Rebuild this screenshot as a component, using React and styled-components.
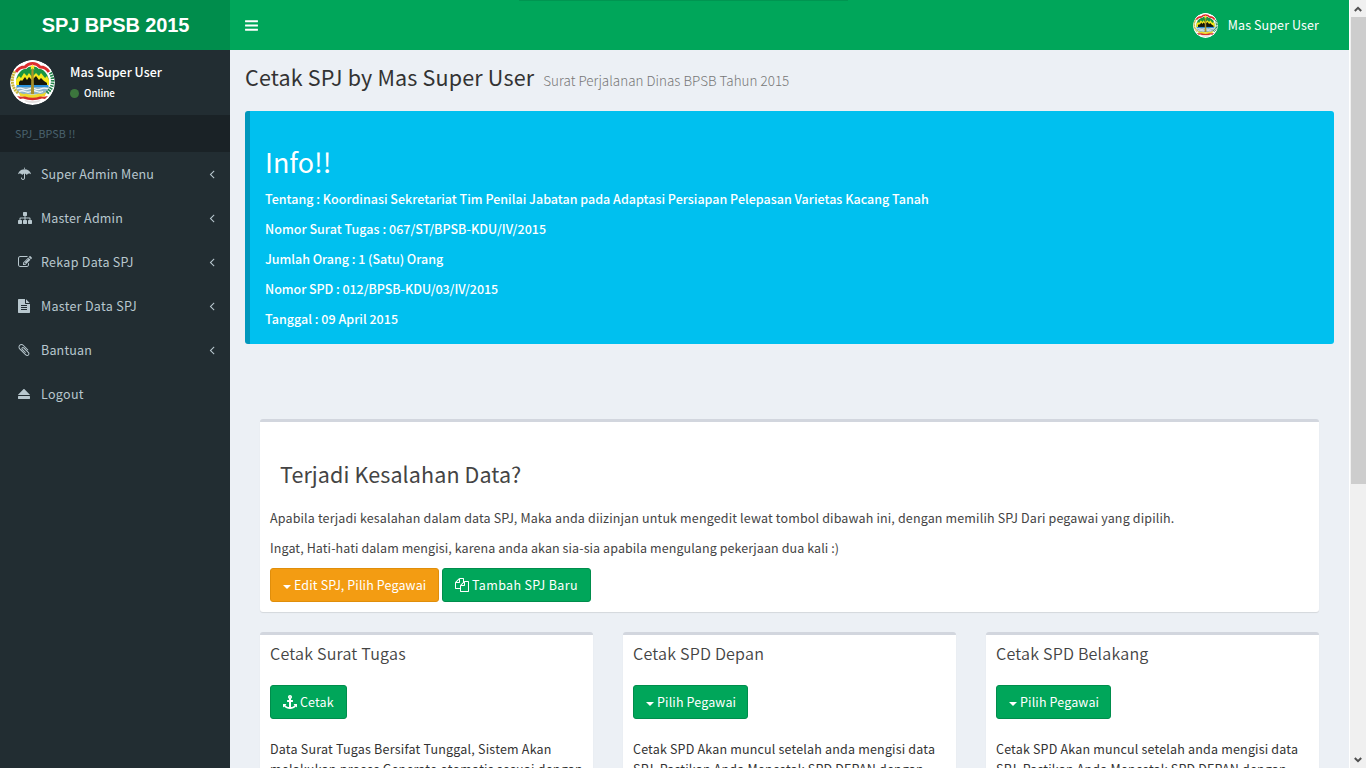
import React from "react";
import styled, { createGlobalStyle } from "styled-components";

const GlobalStyle = createGlobalStyle`
  *, *::before, *::after { box-sizing: border-box; }
  html, body { margin: 0; height: 768px; overflow: hidden; }
  body {
    font-family: "Noto Sans CJK JP", "Noto Sans", sans-serif;
    font-size: 12.5px;
    line-height: 20px;
    color: #333;
    background: #ecf0f5;
  }
  h1, h2, h3, h4, p { margin: 0; font-weight: 400; }
`;

/* ---------- icons: [left edge, width, path] in a 1792-unit-high box ---------- */

const ICONS = {
  bars: [0, 1792, "M1664 1344v128q0 26-19 45t-45 19h-1408q-26 0-45-19t-19-45v-128q0-26 19-45t45-19h1408q26 0 45 19t19 45zm0-512v128q0 26-19 45t-45 19h-1408q-26 0-45-19t-19-45v-128q0-26 19-45t45-19h1408q26 0 45 19t19 45zm0-512v128q0 26-19 45t-45 19h-1408q-26 0-45-19t-19-45v-128q0-26 19-45t45-19h1408q26 0 45 19t19 45z"],
  umbrella: [0, 1664, "M896 708v692q0 104-76 180t-180 76-180-76-76-180q0-26 19-45t45-19 45 19 19 45q0 50 39 89t89 39 89-39 39-89v-692q33-11 74-11t74 11zM1664 889q0 13-9.500 22.500t-22.500 9.500q-11 0-23-10-49-46-93-69t-102-23q-68 0-128 37t-103 97q-7 10-17.500 28t-14.500 24q-11 17-28 17-18 0-29-17-4-6-14.500-24t-17.500-28q-43-60-102.500-97t-127.500-37-127.500 37-102.500 97q-7 10-17.500 28t-14.500 24q-11 17-29 17-17 0-28-17-4-6-14.500-24t-17.500-28q-43-60-103-97t-128-37q-58 0-102 23t-93 69q-12 10-23 10-13 0-22.500-9.500t-9.500-22.500q0-5 1-7 45-183 172.500-319.500t298-204.500 360.500-68q140 0 274.500 40t246.500 113.500 194.500 187 115.500 251.500q1 2 1 7zM896 128v98q-42-2-64-2t-64 2v-98q0-26 19-45t45-19 45 19 19 45z"],
  sitemap: [0, 1792, "M1792 1248v320q0 40-28 68t-68 28h-320q-40 0-68-28t-28-68v-320q0-40 28-68t68-28h96v-192h-512v192h96q40 0 68 28t28 68v320q0 40-28 68t-68 28h-320q-40 0-68-28t-28-68v-320q0-40 28-68t68-28h96v-192h-512v192h96q40 0 68 28t28 68v320q0 40-28 68t-68 28h-320q-40 0-68-28t-28-68v-320q0-40 28-68t68-28h96v-192q0-52 38-90t90-38h512v-192h-96q-40 0-68-28t-28-68v-320q0-40 28-68t68-28h320q40 0 68 28t28 68v320q0 40-28 68t-68 28h-96v192h512q52 0 90 38t38 90v192h96q40 0 68 28t28 68z"],
  edit: [0, 1792, "M888 1184l116-116-152-152-116 116v56h96v96h56zm440-720q-16-16-33 1l-350 350q-17 17-1 33t33-1l350-350q17-17 1-33zm80 594v190q0 119-84.500 203.500t-203.500 84.500h-832q-119 0-203.500-84.500t-84.500-203.500v-832q0-119 84.500-203.500t203.500-84.500h832q63 0 117 25 15 7 18 23 3 17-9 29l-49 49q-14 14-32 8-23-6-45-6h-832q-66 0-113 47t-47 113v832q0 66 47 113t113 47h832q66 0 113-47t47-113v-126q0-13 9-22l64-64q15-15 35-7t20 29zm-96-738l288 288-672 672h-288v-288zm444 132l-92 92-288-288 92-92q28-28 68-28t68 28l152 152q28 28 28 68t-28 68z"],
  file: [128, 1536, "M1596 476q14 14 28 36h-472v-472q22 14 36 28zm-476 164h544v1056q0 40-28 68t-68 28h-1344q-40 0-68-28t-28-68v-1600q0-40 28-68t68-28h800v544q0 40 28 68t68 28zm160 736v-64q0-14-9-23t-23-9h-704q-14 0-23 9t-9 23v64q0 14 9 23t23 9h704q14 0 23-9t9-23zm0-256v-64q0-14-9-23t-23-9h-704q-14 0-23 9t-9 23v64q0 14 9 23t23 9h704q14 0 23-9t9-23zm0-256v-64q0-14-9-23t-23-9h-704q-14 0-23 9t-9 23v64q0 14 9 23t23 9h704q14 0 23-9t9-23z"],
  paperclip: [135, 1536, "M1596 1385q0 117-79 196t-196 79q-135 0-235-100l-777-776q-113-115-113-271 0-159 110-270t269-111q158 0 273 113l605 606q10 10 10 22 0 16-30.500 46.500t-46.500 30.500q-13 0-23-10l-606-607q-79-77-181-77-106 0-179 75t-73 181q0 105 76 181l776 777q63 63 145 63 64 0 106-42t42-106q0-82-63-145l-581-581q-26-24-60-24-29 0-48 19t-19 48q0 32 25 59l410 410q10 10 10 22 0 16-31 47t-47 31q-12 0-22-10l-410-410q-63-61-63-149 0-82 57-139t139-57q88 0 149 63l581 581q100 98 100 235z"],
  eject: [128, 1536, "M135 979l710-710q19-19 45-19t45 19l710 710q19 19 13 32t-32 13h-1472q-26 0-32-13t13-32zM1600 1536h-1408q-26 0-45-19t-19-45v-256q0-26 19-45t45-19h1408q26 0 45 19t19 45v256q0 26-19 45t-45 19z"],
  angleLeft: [0, 1792, "M1203 544q0 13-10 23l-393 393 393 393q10 10 10 23t-10 23l-50 50q-10 10-23 10t-23-10l-466-466q-10-10-10-23t10-23l466-466q10-10 23-10t23 10l50 50q10 10 10 23z"],
  copy: [0, 1792, "M1696 384q40 0 68 28t28 68v1216q0 40-28 68t-68 28h-960q-40 0-68-28t-28-68v-288h-544q-40 0-68-28t-28-68v-672q0-40 20-88t48-76l408-408q28-28 76-48t88-20h416q40 0 68 28t28 68v328q68-40 128-40h416zm-544 213l-299 299h299v-299zm-640-384l-299 299h299v-299zm196 647l316-316v-416h-384v416q0 40-28 68t-68 28h-416v640h512v-256q0-40 20-88t48-76zm956 804v-1152h-384v416q0 40-28 68t-68 28h-416v640h896z"],
  anchor: [0, 1792, "M960 256q0-26-19-45t-45-19-45 19-19 45 19 45 45 19 45-19 19-45zm832 928v352q0 22-20 30-8 2-12 2-13 0-23-9l-93-93q-119 143-318.500 226.500t-429.500 83.500-429.500-83.500-318.500-226.500l-93 93q-9 9-23 9-4 0-12-2-20-8-20-30v-352q0-14 9-23t23-9h352q22 0 30 20 8 19-7 35l-100 100q67 91 189.500 153.500t271.500 82.500v-647h-192q-26 0-45-19t-19-45v-128q0-26 19-45t45-19h192v-163q-58-34-93-92.500t-35-128.500q0-106 75-181t181-75 181 75 75 181q0 70-35 128.500t-93 92.500v163h192q26 0 45 19t19 45v128q0 26-19 45t-45 19h-192v647q149-20 271.500-82.500t189.500-153.500l-100-100q-15-16-7-35 8-20 30-20h352q14 0 23 9t9 23z"],
};

const Glyph = styled.svg`
  display: block;
  flex: none;
  fill: currentColor;
`;

function Icon({ name, size = 14 }) {
  const [x, w, d] = ICONS[name];
  return (
    <Glyph width={(size * w) / 1792} height={size} viewBox={`${x} 0 ${w} 1792`}>
      <path d={d} />
    </Glyph>
  );
}

const EmblemSvg = styled.svg`
  display: block;
  flex: none;
  border-radius: 50%;
`;

function Emblem({ size }) {
  return (
    <EmblemSvg width={size} height={size} viewBox="0 0 45 45">
      <circle cx="22.5" cy="22.5" r="22.5" fill="#fff" />
      <path d="M6 25Q5 9 22.500 6Q40 9 39 25z" fill="#1c9440" />
      <path d="M6 25v-5l3-4 2 2 3-5 3 3 2-3 3 4 4-4 3 3 2-3 4 5 2-2 2 4v5z" fill="#f6e71c" />
      <path d="M9 26v-4l2-2 1 1 3-4 2 3 2-3 3 3 4-4 3 4 2-2 3 3 3 2v3z" fill="#17180c" />
      <path d="M6 25.500h33q0 6-4 9H10q-4-3-4-9z" fill="#8fb4c8" />
      <path d="M7 26h31" stroke="#2a92dc" strokeWidth="1.800" />
      <path d="M7 28.800q3-1.500 6 0t6 0 6 0 6 0 7 0M9 31.500q3-1.500 6 0t6 0 6 0 6 0" fill="none" stroke="#f2f6f8" strokeWidth="1.300" />
      <path d="M21.500 9h2l.6 25h-3.200z" fill="#a8912a" />
      <path d="M8 33C1 27 1 18 5 11" fill="none" stroke="#c9b53a" strokeWidth="3" strokeDasharray="2 .7" />
      <path d="M37 33C44 27 44 18 40 12" fill="none" stroke="#23854a" strokeWidth="3.600" strokeDasharray="1.600 1" />
      <path d="M6 11q3-5 9-5 3-3 7.500-3T30 6q6 0 9 5" fill="none" stroke="#fff" strokeWidth="6" />
      <path d="M6 12q3-5 9-5 3-3.500 7.500-3.500T30 7q6 0 9 5" fill="none" stroke="#dc2d2d" strokeWidth="2.800" />
      <path d="M22.500 4l.9 2 2.100.2-1.600 1.400.5 2.100-1.900-1.100-1.900 1.100.5-2.100-1.600-1.400 2.100-.2z" fill="#ffe92e" />
      <path d="M9 32q4 3 7 1.500 3 1.500 6.500 1 3.500.5 6.500-1 3 1.500 7-1.500l-1 4q-12.500 4.500-25 0z" fill="#efd92c" />
      <path d="M7 36q4 1 8 .5 7.500 2.500 15 0 4 .5 8-.5l-3 3-3-.5q-9.500 3.500-19 0l-3 .5z" fill="#d5302b" />
      <path d="M14 39.800q8.500 2.400 17 0l-2 2.200q-6.500 2-13 0z" fill="#e4e0e0" />
    </EmblemSvg>
  );
}

/* ---------- shell ---------- */

const Page = styled.div`
  display: flex;
  width: 1366px;
  height: 768px;
  overflow: hidden;
`;

const Sidebar = styled.aside`
  width: 230px;
  flex: none;
  background: #222d32;
  color: #b8c7ce;
`;

const Brand = styled.div`
  height: 50px;
  background: #008d4c;
  color: #fff;
  font: 700 20px/50px "Liberation Sans", Arial, sans-serif;
  letter-spacing: -0.13px;
  text-align: center;
  padding-left: 1px;
`;

const UserPanel = styled.div`
  display: flex;
  height: 65px;
  padding: 10px;
  gap: 15px;
`;

const UserInfo = styled.div`
  color: #fff;
  font-weight: 500;
  padding-top: 2px;
`;

const UserName = styled.div`
  height: 20px;
  white-space: nowrap;
`;

const Status = styled.div`
  display: flex;
  align-items: center;
  gap: 5px;
  height: 22px;
  font-size: 9.8px;
`;

const Dot = styled.span`
  width: 9px;
  height: 9px;
  border-radius: 50%;
  background: #3c763d;
`;

const MenuHeader = styled.div`
  height: 37px;
  padding: 0 15px;
  background: #1a2226;
  color: #4b646f;
  font-size: 10.7px;
  line-height: 37px;
  letter-spacing: 0.1px;
`;

const MenuItem = styled.div`
  display: flex;
  align-items: center;
  height: 44px;
  padding: 0 11px 0 18px;
  letter-spacing: ${(p) => p.$track}px;
`;

const IconSlot = styled.span`
  width: 23px;
  flex: none;
`;

const MenuLabel = styled.span`
  flex: 1;
`;

const Main = styled.div`
  width: 1119px;
  flex: none;
  background: #ecf0f5;
`;

const Navbar = styled.header`
  display: flex;
  align-items: center;
  justify-content: space-between;
  height: 50px;
  padding: 0 30px 0 14px;
  background: linear-gradient(#009551, #009551) 289px 0 / 329px 1px no-repeat #00a65a;
  color: #fff;
`;

const NavUser = styled.div`
  display: flex;
  align-items: center;
  gap: 10px;
  letter-spacing: 0.1px;
`;

const ContentHeader = styled.div`
  display: flex;
  align-items: baseline;
  height: 61px;
  padding: 14px 15px 0;
`;

const PageTitle = styled.h1`
  font-size: 21.5px;
  line-height: 26px;
  letter-spacing: 0.17px;
  margin-right: 9px;
`;

const SubTitle = styled.small`
  font-size: 13.4px;
  font-weight: 300;
  color: #777;
  letter-spacing: 0.04px;
`;

const Callout = styled.section`
  height: 233px;
  margin: 0 15px;
  padding: 34px 15px 0;
  border-left: 5px solid #0097bc;
  border-radius: 3px;
  background: #00c0ef;
  color: #fff;
`;

const CalloutTitle = styled.h2`
  font-size: 26.9px;
  line-height: 33px;
  margin-bottom: 11px;
`;

const CalloutLine = styled.p`
  font-weight: 500;
  margin-bottom: 10px;
  letter-spacing: ${(p) => p.$track}px;
`;

const Boxes = styled.div`
  display: flex;
  flex-direction: column;
  gap: 20px;
  padding: 75px 30px 0;
`;

const Box = styled.section`
  background: #fff;
  border-top: 3px solid #d2d6de;
  border-radius: 3px;
  box-shadow: 0 1px 1px rgba(0, 0, 0, 0.1);
  height: ${(p) => p.$height}px;
  padding: ${(p) => p.$pad}px 10px 10px;
`;

const BoxRow = styled.div`
  display: grid;
  grid-template-columns: repeat(3, 333px);
  gap: 30px;
`;

const BoxHeading = styled.h3`
  font-size: 21.5px;
  line-height: 26px;
  letter-spacing: 0.1px;
  color: #444;
  padding-left: 10px;
  margin-bottom: 21px;
`;

const SmallHeading = styled.h4`
  font-size: 16.1px;
  font-weight: 350;
  line-height: 18px;
  letter-spacing: 0.2px;
  color: #444;
  margin-bottom: 23px;
`;

const Text = styled.p`
  white-space: nowrap;
  color: ${(p) => p.$color || "#444"};
  margin-bottom: ${(p) => p.$gap || 0}px;
  letter-spacing: ${(p) => p.$track}px;
`;

const ButtonRow = styled.div`
  display: flex;
  gap: 3px;
`;

const Button = styled.button`
  display: flex;
  align-items: center;
  gap: 3px;
  width: ${(p) => p.$width}px;
  height: 34px;
  padding: 0 0 0 12px;
  border: 1px solid ${(p) => (p.$warning ? "#e08e0b" : "#008d4c")};
  border-radius: 3px;
  background: ${(p) => (p.$warning ? "#f39c12" : "#00a65a")};
  color: #fff;
  font: inherit;
  letter-spacing: ${(p) => p.$track || 0.14}px;
  white-space: nowrap;
`;

const Caret = styled.span`
  margin-top: 3px;
  border: 4px solid transparent;
  border-top-color: #fff;
  border-bottom: 0;
`;

const Scrollbar = styled.div`
  display: flex;
  flex-direction: column;
  align-items: center;
  justify-content: space-between;
  width: 17px;
  flex: none;
  padding-bottom: 5px;
  background: #f0f0f0;
  border-left: 1px solid #fff;
  color: #505050;
`;

const Thumb = styled.div`
  width: 15px;
  height: 467px;
  background: #cdcdcd;
`;

const ArrowCell = styled.div`
  display: flex;
  align-items: center;
  justify-content: center;
  height: 17px;
`;

const Arrow = styled.svg`
  display: block;
  fill: none;
  stroke: currentColor;
  stroke-width: 2;
`;

const MENU = [
  { icon: "umbrella", label: "Super Admin Menu", track: 0.16, nested: true },
  { icon: "sitemap", label: "Master Admin", track: 0.18, nested: true },
  { icon: "edit", label: "Rekap Data SPJ", track: 0.28, nested: true },
  { icon: "file", label: "Master Data SPJ", track: 0.3, nested: true },
  { icon: "paperclip", label: "Bantuan", track: 0.18, nested: true },
  { icon: "eject", label: "Logout", track: 0.32, nested: false },
];

const INFO = [
  {
    text: "Tentang : Koordinasi Sekretariat Tim Penilai Jabatan pada Adaptasi Persiapan Pelepasan Varietas Kacang Tanah",
    track: 0.01,
  },
  { text: "Nomor Surat Tugas : 067/ST/BPSB-KDU/IV/2015", track: 0.03 },
  { text: "Jumlah Orang : 1 (Satu) Orang", track: -0.03 },
  { text: "Nomor SPD : 012/BPSB-KDU/03/IV/2015", track: -0.05 },
  { text: "Tanggal : 09 April 2015", track: 0.02 },
];

const PRINTS = [
  {
    title: "Cetak Surat Tugas",
    icon: "anchor",
    label: "Cetak",
    width: 77,
    lines: ["Data Surat Tugas Bersifat Tunggal, Sistem Akan", "melakukan proses Generate otomatis sesuai dengan"],
    track: 0.21,
  },
  {
    title: "Cetak SPD Depan",
    label: "Pilih Pegawai",
    width: 115,
    lines: ["Cetak SPD Akan muncul setelah anda mengisi data", "SPJ, Pastikan Anda Mencetak SPD DEPAN dengan"],
    track: 0.18,
  },
  {
    title: "Cetak SPD Belakang",
    label: "Pilih Pegawai",
    width: 115,
    lines: ["Cetak SPD Akan muncul setelah anda mengisi data", "SPJ, Pastikan Anda Mencetak SPD DEPAN dengan"],
    track: 0.18,
  },
];

export default function App() {
  return (
    <Page>
      <GlobalStyle />
      <Sidebar>
        <Brand>SPJ BPSB 2015</Brand>
        <UserPanel>
          <Emblem size={45} />
          <UserInfo>
            <UserName>Mas Super User</UserName>
            <Status>
              <Dot />
              Online
            </Status>
          </UserInfo>
        </UserPanel>
        <MenuHeader>SPJ_BPSB !!</MenuHeader>
        {MENU.map((item) => (
          <MenuItem key={item.label} $track={item.track}>
            <IconSlot>
              <Icon name={item.icon} />
            </IconSlot>
            <MenuLabel>{item.label}</MenuLabel>
            {item.nested && <Icon name="angleLeft" />}
          </MenuItem>
        ))}
      </Sidebar>
      <Main>
        <Navbar>
          <Icon name="bars" size={15} />
          <NavUser>
            <Emblem size={25} />
            Mas Super User
          </NavUser>
        </Navbar>
        <ContentHeader>
          <PageTitle>Cetak SPJ by Mas Super User</PageTitle>
          <SubTitle>Surat Perjalanan Dinas BPSB Tahun 2015</SubTitle>
        </ContentHeader>
        <Callout>
          <CalloutTitle>Info!!</CalloutTitle>
          {INFO.map((line) => (
            <CalloutLine key={line.text} $track={line.track}>
              {line.text}
            </CalloutLine>
          ))}
        </Callout>
        <Boxes>
          <Box $height={193} $pad={39}>
            <BoxHeading>Terjadi Kesalahan Data?</BoxHeading>
            <Text $track={0.15} $gap={10}>
              Apabila terjadi kesalahan dalam data SPJ, Maka anda diizinjan untuk mengedit lewat tombol dibawah ini,
              dengan memilih SPJ Dari pegawai yang dipilih.
            </Text>
            <Text $track={0.09} $gap={10}>
              Ingat, Hati-hati dalam mengisi, karena anda akan sia-sia apabila mengulang pekerjaan dua kali :)
            </Text>
            <ButtonRow>
              <Button $warning $width={169}>
                <Caret />
                Edit SPJ, Pilih Pegawai
              </Button>
              <Button $width={149} $track={0.36}>
                <Icon name="copy" />
                Tambah SPJ Baru
              </Button>
            </ButtonRow>
          </Box>
          <BoxRow>
            {PRINTS.map((item) => (
              <Box key={item.title} $height={220} $pad={9}>
                <SmallHeading>{item.title}</SmallHeading>
                <Button $width={item.width}>
                  {item.icon ? <Icon name={item.icon} /> : <Caret />}
                  {item.label}
                </Button>
                <Text as="div" $color="#333" $track={item.track}>
                  <br />
                  {item.lines.map((line) => (
                    <div key={line}>{line}</div>
                  ))}
                </Text>
              </Box>
            ))}
          </BoxRow>
        </Boxes>
      </Main>
      <Scrollbar>
        <div>
          <ArrowCell>
            <Arrow width="8" height="6" viewBox="0 0 8 6">
              <path d="M.8 5L4 1.800 7.200 5" />
            </Arrow>
          </ArrowCell>
          <Thumb />
        </div>
        <Arrow width="8" height="6" viewBox="0 0 8 6">
          <path d="M.8 1L4 4.200 7.200 1" />
        </Arrow>
      </Scrollbar>
    </Page>
  );
}
